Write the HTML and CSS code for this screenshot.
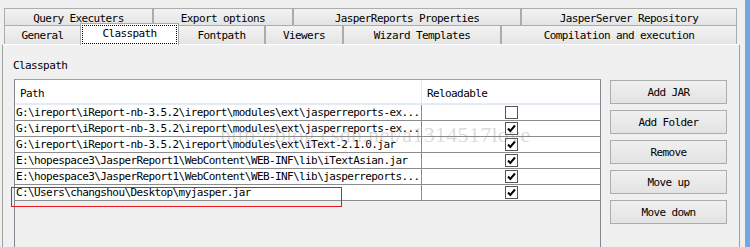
FILE: index.html
```html
<!DOCTYPE html>
<html>
<head>
  <title>Options - Classpath</title>
  <meta charset="utf-8">
  <link rel="stylesheet" href="styles.css">
</head>
<body>
  <div class="window">
    <div class="dialog">
      <div class="tab-row back">
        <div class="tab tab-query">Query Executers</div>
        <div class="tab tab-export">Export options</div>
        <div class="tab tab-jrprops">JasperReports Properties</div>
        <div class="tab tab-server">JasperServer Repository</div>
      </div>
      <div class="tab-row front">
        <div class="tab tab-general">General</div>
        <div class="tab tab-classpath selected"><span class="focus">Classpath</span></div>
        <div class="tab tab-fontpath">Fontpath</div>
        <div class="tab tab-viewers">Viewers</div>
        <div class="tab tab-wizard">Wizard Templates</div>
        <div class="tab tab-compile">Compilation and execution</div>
      </div>

      <div class="panel">
        <div class="panel-title">Classpath</div>
        <div class="panel-body">
          <div class="table-pane">
            <div class="grid-head">
              <div class="col-path">Path</div>
              <div class="col-reload">Reloadable</div>
            </div>
            <div class="grid-row">
              <div class="col-path">G:\ireport\iReport-nb-3.5.2\ireport\modules\ext\jasperreports-ex...</div>
              <div class="col-reload"><span class="check"></span></div>
            </div>
            <div class="grid-row">
              <div class="col-path">G:\ireport\iReport-nb-3.5.2\ireport\modules\ext\jasperreports-ex...</div>
              <div class="col-reload"><span class="check"><svg viewBox="0 0 11 11"><polyline points="2,5.5 4.3,8 9,2.5"/></svg></span></div>
            </div>
            <div class="grid-row">
              <div class="col-path">G:\ireport\iReport-nb-3.5.2\ireport\modules\ext\iText-2.1.0.jar</div>
              <div class="col-reload"><span class="check"><svg viewBox="0 0 11 11"><polyline points="2,5.5 4.3,8 9,2.5"/></svg></span></div>
            </div>
            <div class="grid-row">
              <div class="col-path">E:\hopespace3\JasperReport1\WebContent\WEB-INF\lib\iTextAsian.jar</div>
              <div class="col-reload"><span class="check"><svg viewBox="0 0 11 11"><polyline points="2,5.5 4.3,8 9,2.5"/></svg></span></div>
            </div>
            <div class="grid-row">
              <div class="col-path">E:\hopespace3\JasperReport1\WebContent\WEB-INF\lib\jasperreports...</div>
              <div class="col-reload"><span class="check"><svg viewBox="0 0 11 11"><polyline points="2,5.5 4.3,8 9,2.5"/></svg></span></div>
            </div>
            <div class="grid-row">
              <div class="col-path">C:\Users\changshou\Desktop\myjasper.jar</div>
              <div class="col-reload"><span class="check"><svg viewBox="0 0 11 11"><polyline points="2,5.5 4.3,8 9,2.5"/></svg></span></div>
            </div>
          </div>

          <div class="buttons">
            <button>Add JAR</button>
            <button>Add Folder</button>
            <button>Remove</button>
            <button>Move up</button>
            <button>Move down</button>
          </div>
        </div>

        <!-- blog watermark and red annotation drawn over the screenshot -->
        <div class="watermark">http://blog.csdn.net/a1314517love</div>
        <div class="highlight"></div>
      </div>
    </div>
    <div class="frame-edge"></div>
  </div>
</body>
</html>
```

FILE: styles.css
```css
body {
  margin: 0;
  height: 247px;
  overflow: hidden;
  background-color: #f0f0f0;
  color: #000;
  font-family: "DejaVu Sans Mono", "Liberation Mono", monospace;
  font-size: 11px;
  letter-spacing: -0.6px;
}

.window {
  display: flex;
  height: 247px;
}

.dialog {
  width: 745px;
  display: flex;
  flex-direction: column;
}

.frame-edge {
  width: 5px;
  background-color: #72a7e0;
}

/* tabs */
.tab-row {
  display: flex;
  margin-left: 4px;
}

.tab-row.back {
  margin-top: 8px;
  height: 17px;
}

.tab-row.front {
  height: 19px;
  align-items: flex-end;
}

.tab {
  box-sizing: border-box;
  border: 1px solid #acacac;
  border-bottom: none;
  background: linear-gradient(#f3f3f3, #e4e4e4);
  text-align: center;
  line-height: 16px;
  padding-top: 2px;
  white-space: nowrap;
  overflow: hidden;
}

.back .tab {
  height: 17px;
}

.front .tab {
  height: 19px;
}

.tab-query { width: 149px; }
.tab-export { width: 140px; }
.tab-jrprops { width: 228px; }
.tab-server { width: 216px; }

.tab-general { width: 77px; }
.tab-classpath { width: 99px; }
.tab-fontpath { width: 87px; }
.tab-viewers { width: 78px; }
.tab-wizard { width: 158px; }
.tab-compile { width: 236px; }

.front .tab.selected {
  height: 22px;
  margin: 0 -1px -1px;
  padding-top: 1px;
  background: #fff;
  position: relative;
  z-index: 1;
}

.focus {
  display: block;
  box-sizing: border-box;
  height: 19px;
  margin: 0 1px;
  border: 1px dotted #000;
  line-height: 16px;
}

/* panel */
.panel {
  flex: 1;
  position: relative;
  width: 738px;
  margin-left: 2px;
  box-sizing: border-box;
  border-left: 1px solid #a0a0a0;
  border-right: 1px solid #a0a0a0;
  border-top: 1px solid #fff;
  padding-left: 10px;
  display: flex;
  flex-direction: column;
}

.panel-title {
  line-height: 16px;
  margin-top: 13px;
  margin-bottom: 5px;
}

.panel-body {
  flex: 1;
  display: flex;
}

.table-pane {
  width: 587px;
  margin-left: 1px;
  box-sizing: border-box;
  border: 1px solid #828790;
  border-top-color: #a0a0a0;
  border-bottom: none;
  background-color: #f0f0f0;
}

.grid-head {
  display: flex;
  height: 25px;
  box-sizing: border-box;
  background-color: #fff;
  border-bottom: 2px solid #e3ebf5;
  line-height: 16px;
}

.grid-head .col-path {
  width: 407px;
  box-sizing: border-box;
  border-right: 1px solid #e4e8ee;
  padding: 6px 0 0 5px;
}

.grid-head .col-reload {
  flex: 1;
  padding: 6px 0 0 5px;
}

.grid-row {
  display: flex;
  height: 16px;
  box-sizing: border-box;
  border-bottom: 1px solid #8c8c8c;
  background-color: #fff;
  line-height: 15px;
}

.grid-row .col-path {
  width: 407px;
  box-sizing: border-box;
  border-right: 1px solid #8c8c8c;
  padding-left: 1px;
  white-space: nowrap;
  overflow: hidden;
}

.grid-row .col-reload {
  flex: 1;
  display: flex;
  justify-content: center;
  align-items: center;
}

.check {
  display: flex;
  width: 13px;
  height: 13px;
  box-sizing: border-box;
  border: 1px solid #555;
  background-color: #fff;
}

.check svg {
  width: 11px;
  height: 11px;
  fill: none;
  stroke: #000;
  stroke-width: 2;
}

/* buttons */
.buttons {
  display: flex;
  flex-direction: column;
  gap: 6px;
  margin: 1px 0 0 9px;
}

button {
  width: 117px;
  height: 24px;
  box-sizing: border-box;
  border: 1px solid #acacac;
  background: linear-gradient(#f0f0f0, #e3e3e3);
  color: #000;
  font: inherit;
  letter-spacing: inherit;
  line-height: 20px;
  padding: 2px 0 0;
}

/* overlays */
.watermark {
  position: absolute;
  left: 217px;
  top: 79px;
  font-family: "Liberation Serif", serif;
  font-size: 22px;
  letter-spacing: 0.3px;
  line-height: 22px;
  color: rgba(130, 130, 130, 0.3);
  white-space: nowrap;
  pointer-events: none;
}

.highlight {
  position: absolute;
  left: 8px;
  top: 142px;
  width: 331px;
  height: 20px;
  box-sizing: border-box;
  border: 1px solid #e8161c;
}
```
